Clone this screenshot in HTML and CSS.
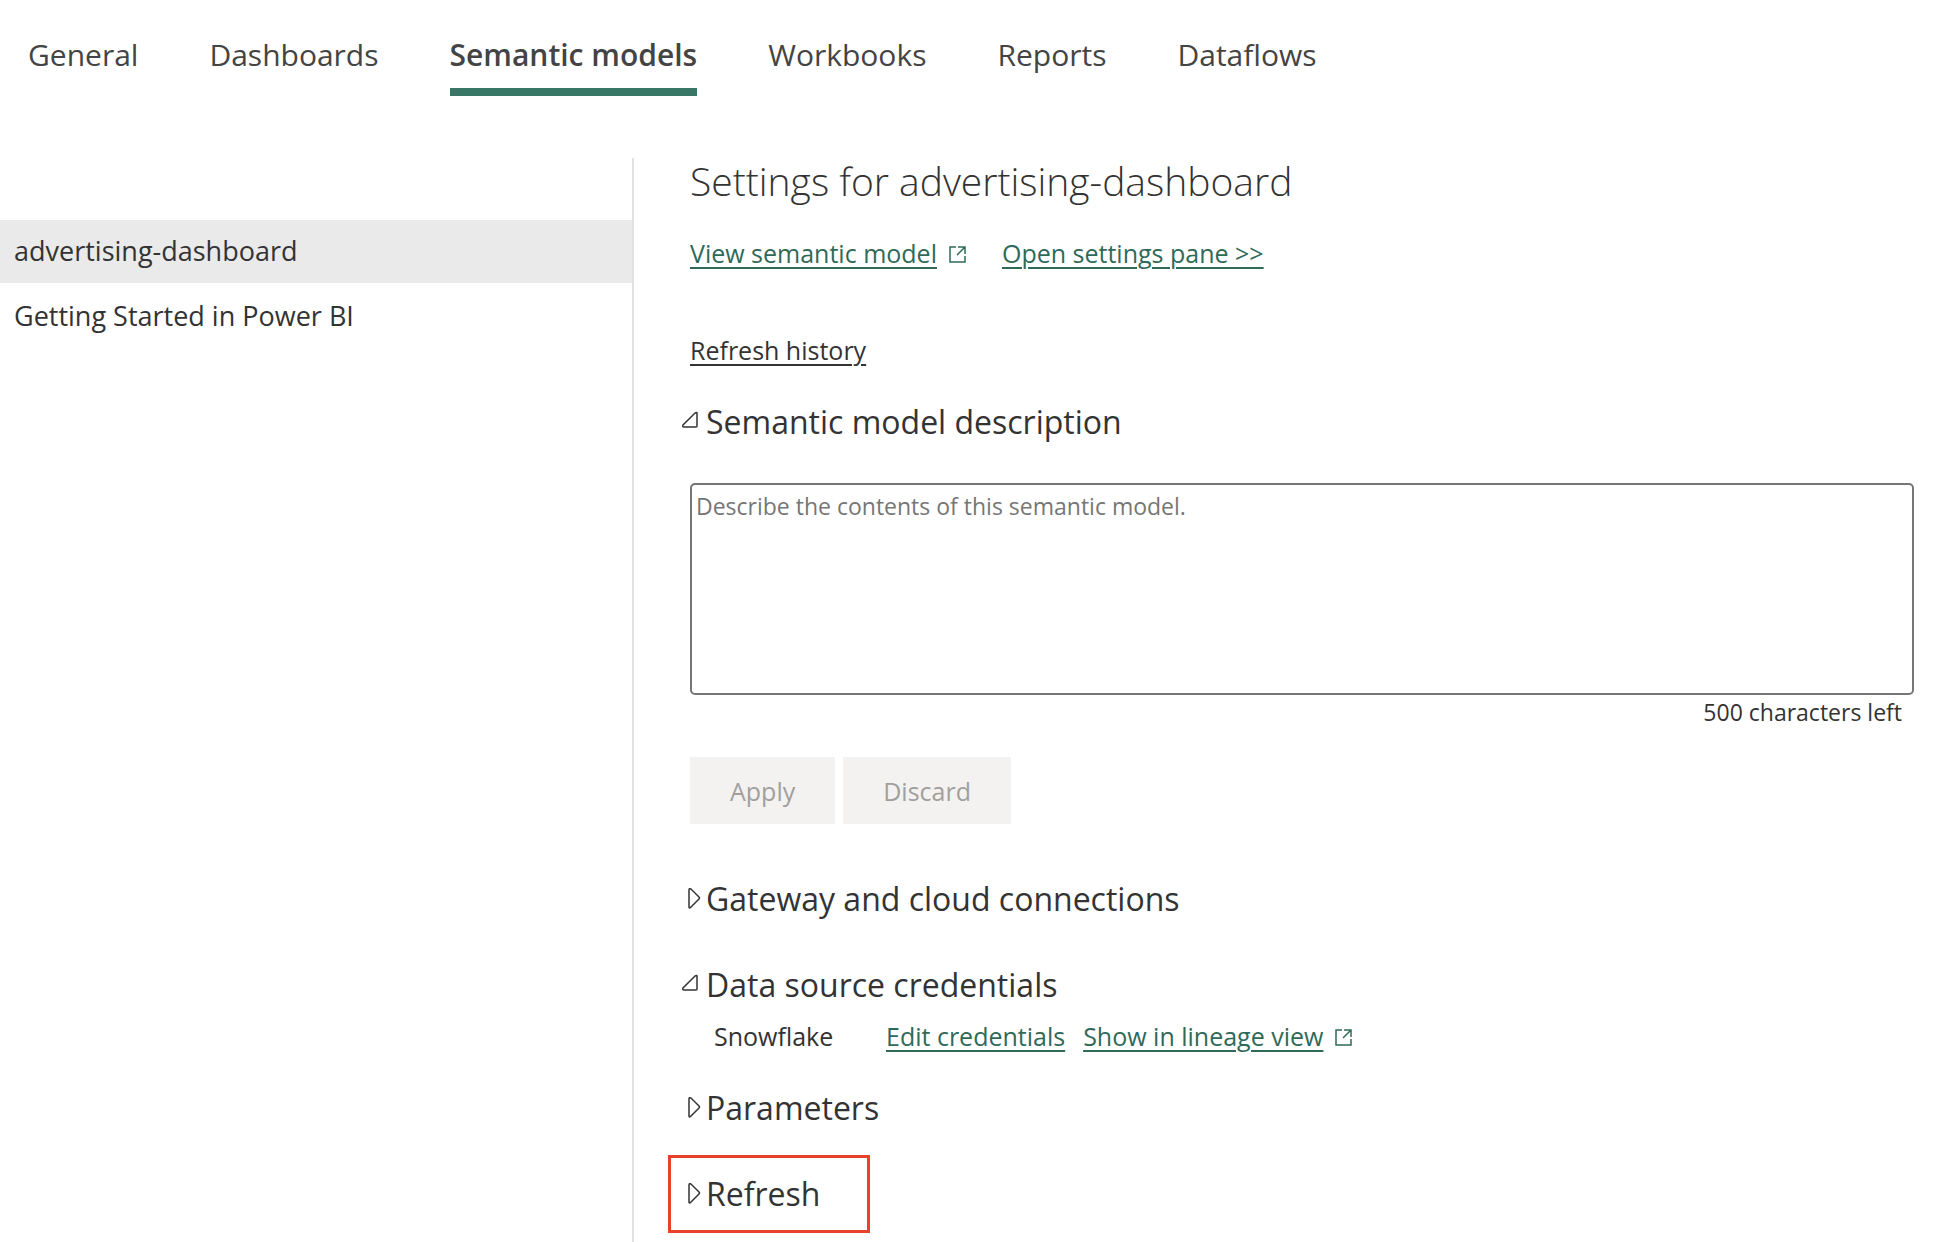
FILE: index.html
```html
<!DOCTYPE html>
<html lang="en">
<head>
  <meta charset="UTF-8" />
  <meta name="viewport" content="width=device-width, initial-scale=1.0"/>
  <title>Settings - Semantic models</title>
  <link rel="stylesheet" href="styles.css">
</head>
<body>

  <nav class="tabs">
    <a href="#general">General</a>
    <a href="#dashboards">Dashboards</a>
    <a href="#models" class="active" aria-current="page">Semantic models</a>
    <a href="#workbooks">Workbooks</a>
    <a href="#reports">Reports</a>
    <a href="#dataflows">Dataflows</a>
  </nav>

  <div class="layout">
    <!-- Model list -->
    <aside class="sidebar">
      <a href="#advertising" class="selected">advertising-dashboard</a>
      <a href="#getting-started">Getting Started in Power BI</a>
    </aside>

    <!-- Settings for the selected model -->
    <main class="settings">
      <h1>Settings for advertising-dashboard</h1>

      <div class="links">
        <a href="#view">View semantic model</a>
        <svg class="external" viewBox="0 0 18 20" aria-hidden="true"><path d="M7 4H1v15h15v-6M9 4h7v7M16 4L8 12"/></svg>
        <a href="#pane" class="pane-link">Open settings pane &gt;&gt;</a>
      </div>

      <a href="#history" class="history">Refresh history</a>

      <section class="description">
        <h2>
          <button type="button" aria-expanded="true">
            <svg class="arrow" viewBox="0 0 24 24" aria-hidden="true"><path d="M15 3v13q0 1-1 1H2q-2 0-1-2L13 3q2-1 2 0z"/></svg>
            Semantic model description
          </button>
        </h2>
        <textarea aria-label="Semantic model description" placeholder="Describe the contents of this semantic model."></textarea>
        <p class="count">500 characters left</p>
        <div class="actions">
          <button type="button" disabled>Apply</button>
          <button type="button" disabled>Discard</button>
        </div>
      </section>

      <section class="gateway">
        <h2>
          <button type="button" aria-expanded="false">
            <svg class="arrow" viewBox="0 0 24 24" aria-hidden="true"><path d="M7 3v17q0 2 2 0l8-8q1-1 0-2L9 2Q7 1 7 3z"/></svg>
            Gateway and cloud connections
          </button>
        </h2>
      </section>

      <section class="credentials">
        <h2>
          <button type="button" aria-expanded="true">
            <svg class="arrow" viewBox="0 0 24 24" aria-hidden="true"><path d="M15 3v13q0 1-1 1H2q-2 0-1-2L13 3q2-1 2 0z"/></svg>
            Data source credentials
          </button>
        </h2>
        <div class="source">
          <span class="source-name">Snowflake</span>
          <a href="#edit">Edit credentials</a>
          <a href="#lineage" class="lineage">Show in lineage view</a>
          <svg class="external" viewBox="0 0 18 20" aria-hidden="true"><path d="M7 4H1v15h15v-6M9 4h7v7M16 4L8 12"/></svg>
        </div>
      </section>

      <section class="parameters">
        <h2>
          <button type="button" aria-expanded="false">
            <svg class="arrow" viewBox="0 0 24 24" aria-hidden="true"><path d="M7 3v17q0 2 2 0l8-8q1-1 0-2L9 2Q7 1 7 3z"/></svg>
            Parameters
          </button>
        </h2>
      </section>

      <section class="refresh">
        <h2>
          <button type="button" aria-expanded="false">
            <svg class="arrow" viewBox="0 0 24 24" aria-hidden="true"><path d="M7 3v17q0 2 2 0l8-8q1-1 0-2L9 2Q7 1 7 3z"/></svg>
            Refresh
          </button>
        </h2>
      </section>
    </main>
  </div>

</body>
</html>
```
FILE: styles.css
```css
* {
  box-sizing: border-box;
}
body {
  margin: 0;
  min-height: 100vh;
  display: flex;
  flex-direction: column;
  font-family: "Open Sans", "Noto Sans", sans-serif;
  font-size: 25px;
  line-height: 32px;
  color: #333;
  background: #fff;
}
h1, h2, p {
  margin: 0;
  font-weight: 400;
}
button {
  font-family: inherit;
  border: none;
}

/* Top tabs */
.tabs {
  display: flex;
  gap: 71px;
  padding: 35px 28px 0;
}
.tabs a {
  padding-bottom: 13px;
  border-bottom: 8px solid transparent;
  font-size: 30px;
  line-height: 40px;
  color: #444;
  text-decoration: none;
  white-space: nowrap;
}
.tabs a.active {
  font-weight: 600;
  border-color: #387765;
}

.layout {
  display: flex;
  flex: 1;
  margin-top: 62px;
}

/* Sidebar */
.sidebar {
  flex: 0 0 634px;
  display: flex;
  flex-direction: column;
  gap: 2px;
  padding-top: 62px;
  border-right: 2px solid #e1e1e1;
}
.sidebar a {
  padding: 13px 14px 14px;
  font-size: 27px;
  line-height: 36px;
  color: #333;
  text-decoration: none;
}
.sidebar a.selected {
  background: #eaeaea;
}

/* Settings */
.settings {
  flex: 1;
  padding: 0 34px 8px 56px;
}
.settings a {
  color: #2f6a59;
  text-decoration-thickness: 2px;
  text-underline-offset: 4px;
}
.settings h1 {
  font-size: 39px;
  font-weight: 300;
  line-height: 46px;
}
.links, .source {
  display: flex;
  align-items: center;
}
.links {
  margin-top: 33px;
}
.external {
  width: 18px;
  height: 20px;
  margin-left: 12px;
  fill: none;
  stroke: #2f6a59;
  stroke-width: 1.5;
}
.pane-link {
  margin-left: 35px;
}
.settings .history {
  display: block;
  width: fit-content;
  margin-top: 65px;
  color: #333;
}

.settings h2 button {
  display: flex;
  align-items: center;
  margin-left: -8px;
  padding: 0;
  font-size: 32px;
  line-height: 40px;
  color: #333;
  background: none;
}
.arrow {
  width: 24px;
  height: 24px;
  fill: none;
  stroke: #333;
  stroke-width: 1.5;
}

.description {
  margin-top: 36px;
}
.description textarea {
  display: block;
  width: 100%;
  height: 212px;
  margin-top: 41px;
  padding: 5px 4px;
  border: 2px solid #767676;
  border-radius: 5px;
  font-family: inherit;
  font-size: 23px;
  line-height: 32px;
  resize: none;
}
.description textarea::placeholder {
  color: #767676;
}
.count {
  margin: 1px 12px 0 0;
  font-size: 23px;
  text-align: right;
}
.actions {
  display: flex;
  gap: 8px;
  margin-top: 29px;
}
.actions button {
  padding: 18px 40px 17px;
  font-size: 25px;
  line-height: 32px;
  color: #a19f9d;
  background: #f3f2f1;
}

.gateway {
  margin-top: 55px;
}
.credentials {
  margin-top: 46px;
}
.source {
  margin-top: 15px;
  padding-left: 24px;
}
.source-name {
  width: 172px;
}
.lineage {
  margin-left: 18px;
}
.parameters {
  margin-top: 36px;
}
.refresh {
  width: 202px;
  margin: 27px 0 0 -22px;
  padding: 16px 19px;
  border: 3px solid #e8432a;
}
```
